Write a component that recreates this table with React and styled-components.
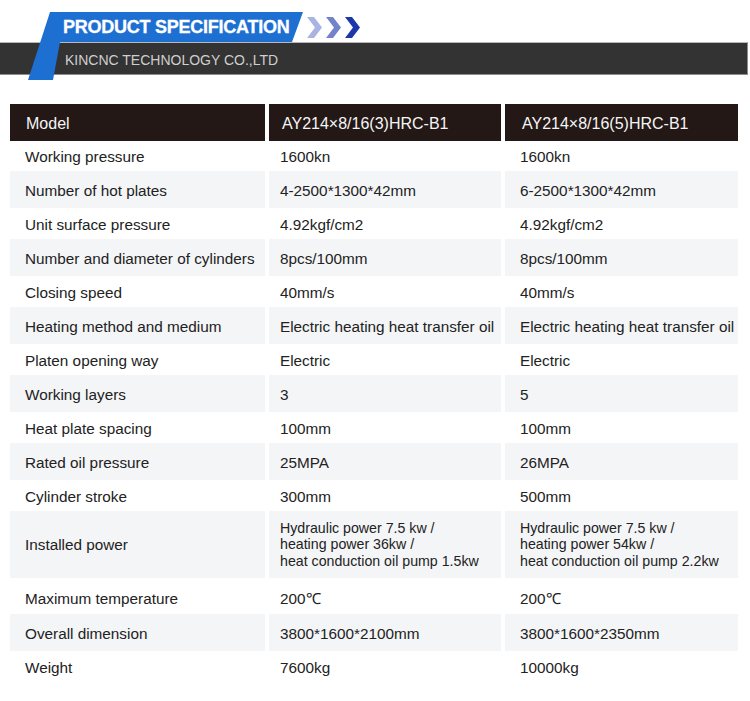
import React from "react";
import styled, { createGlobalStyle } from "styled-components";

const Global = createGlobalStyle`
  html, body { margin: 0; padding: 0; background: #ffffff; }
  body { font-family: "Liberation Sans", Arial, sans-serif; }
`;

const Page = styled.div`
  width: 750px;
  height: 701px;
  overflow: hidden;
  background: #fff;
`;

const Banner = styled.header`
  position: relative;
  height: 80px;
`;

const BlueShape = styled.div`
  position: absolute;
  left: 0;
  top: 0;
  width: 310px;
  height: 80px;
  background: #1e6fd2;
  clip-path: polygon(50px 12px, 303px 12px, 292px 42px, 60px 42px, 53px 80px, 28px 80px);
  z-index: 1;
`;

const TitleRow = styled.div`
  position: relative;
  z-index: 2;
  box-sizing: border-box;
  height: 42px;
  padding: 12px 0 0 63px;
  display: flex;
  align-items: center;
`;

const Title = styled.h1`
  margin: 0;
  font-family: "Liberation Sans", Arial, sans-serif;
  font-weight: 700;
  font-size: 18px;
  line-height: 18px;
  letter-spacing: -0.25px;
  color: #ffffff;
  white-space: nowrap;
  -webkit-text-stroke: 0.3px #ffffff;
`;

const Chevrons = styled.div`
  display: flex;
  gap: 4px;
  margin-left: 18px;
`;

const DarkBar = styled.div`
  position: relative;
  box-sizing: border-box;
  width: 748px;
  height: 33px;
  background: #333333;
  border-top: 1px solid #b8b8b8;
  border-bottom: 1px solid #8c8c8c;
  border-right: 1px solid #8c8c8c;
  padding: 3px 0 0 65px;
  display: flex;
  align-items: center;
`;

const Subtitle = styled.span`
  position: relative;
  z-index: 2;
  font-size: 14px;
  line-height: 14px;
  color: #cfcfcf;
  white-space: nowrap;
`;

const Table = styled.div`
  margin: 24px 0 0 10px;
  width: 728px;
  display: flex;
  flex-direction: column;
`;

const Row = styled.div`
  display: grid;
  grid-template-columns: 255px 232px 233px;
  column-gap: 4px;
  height: ${(p) => p.$h}px;
`;

const Cell = styled.div`
  box-sizing: border-box;
  display: flex;
  align-items: center;
  padding-left: ${(p) => p.$pl}px;
  padding-top: ${(p) => p.$pt || 0}px;
  background: ${(p) => (p.$variant === "head" ? "#231815" : p.$variant === "gray" ? "#f4f5f7" : "#ffffff")};
  color: ${(p) => (p.$variant === "head" ? "#f5f5f5" : "#222222")};
  font-size: ${(p) => (p.$variant === "head" ? 16 : 15.3)}px;
  line-height: 18px;
  white-space: nowrap;
`;

const Multi = styled.div`
  font-size: 14.2px;
  line-height: 16.5px;
  white-space: pre-line;
`;

function Chevron({ color }) {
  return (
    <svg width="15" height="21" viewBox="0 0 15 21">
      <polygon points="0,0 7,0 15,10.5 7,21 0,21 8,10.5" fill={color} />
    </svg>
  );
}

const rows = [
  ["Working pressure", "1600kn", "1600kn"],
  ["Number of hot plates", "4-2500*1300*42mm", "6-2500*1300*42mm"],
  ["Unit surface pressure", "4.92kgf/cm2", "4.92kgf/cm2"],
  ["Number and diameter of cylinders", "8pcs/100mm", "8pcs/100mm"],
  ["Closing speed", "40mm/s", "40mm/s"],
  ["Heating method and medium", "Electric heating heat transfer oil", "Electric heating heat transfer oil"],
  ["Platen opening way", "Electric", "Electric"],
  ["Working layers", "3", "5"],
  ["Heat plate spacing", "100mm", "100mm"],
  ["Rated oil pressure", "25MPA", "26MPA"],
  ["Cylinder stroke", "300mm", "500mm"],
  [
    "Installed power",
    "Hydraulic power 7.5 kw /\nheating power 36kw /\nheat conduction oil pump 1.5kw",
    "Hydraulic power 7.5 kw /\nheating power 54kw /\nheat conduction oil pump 2.2kw",
    true,
  ],
  ["Maximum temperature", "200℃", "200℃"],
  ["Overall dimension", "3800*1600*2100mm", "3800*1600*2350mm"],
  ["Weight", "7600kg", "10000kg"],
];

function rowHeight(i, multi) {
  if (multi) return 67;
  if (i === 0) return 30;
  if (i === 12) return 36;
  return i % 2 === 1 ? 37 : 31;
}

export default function App() {
  return (
    <Page>
      <Global />
      <Banner>
        <BlueShape />
        <TitleRow>
          <Title>PRODUCT SPECIFICATION</Title>
          <Chevrons>
            <Chevron color="#aab4e2" />
            <Chevron color="#7383cb" />
            <Chevron color="#1c37a9" />
          </Chevrons>
        </TitleRow>
        <DarkBar>
          <Subtitle>KINCNC TECHNOLOGY CO.,LTD</Subtitle>
        </DarkBar>
      </Banner>
      <Table>
        <Row $h={37}>
          <Cell $variant="head" $pl={16} $pt={3}>Model</Cell>
          <Cell $variant="head" $pl={13} $pt={3}>AY214×8/16(3)HRC-B1</Cell>
          <Cell $variant="head" $pl={17} $pt={3}>AY214×8/16(5)HRC-B1</Cell>
        </Row>
        {rows.map(([label, a, b, multi], i) => {
          const variant = i % 2 === 1 ? "gray" : "white";
          const pt = i === 12 ? 6 : multi ? 0 : 2;
          return (
            <Row key={label} $h={rowHeight(i, multi)}>
              <Cell $variant={variant} $pl={15} $pt={pt}>{label}</Cell>
              <Cell $variant={variant} $pl={11} $pt={pt}>
                {multi ? <Multi>{a}</Multi> : a}
              </Cell>
              <Cell $variant={variant} $pl={15} $pt={pt}>
                {multi ? <Multi>{b}</Multi> : b}
              </Cell>
            </Row>
          );
        })}
      </Table>
    </Page>
  );
}
